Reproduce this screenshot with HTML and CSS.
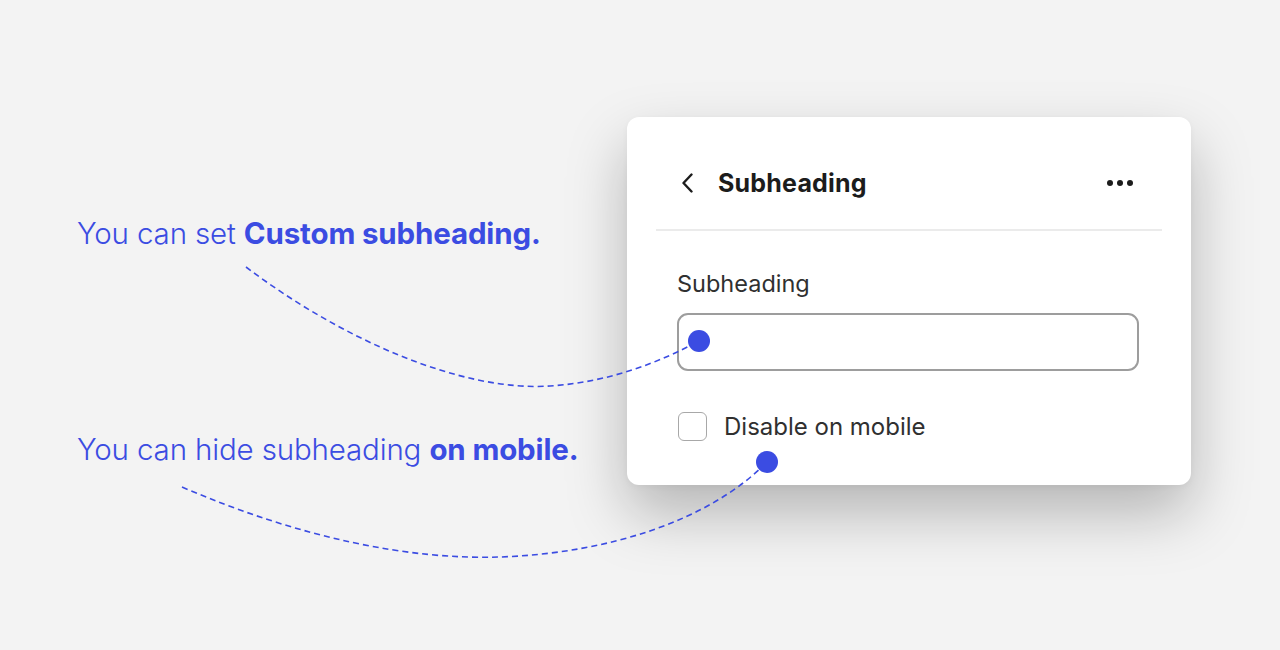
FILE: index.html
```html
<!DOCTYPE html>
<html lang="en">
<head>
<meta charset="utf-8">
<title>Subheading settings</title>
<link rel="stylesheet" href="styles.css">
</head>
<body>
<div class="stage">
  <div class="notes">
    <p class="note note-first">You can set <strong>Custom subheading.</strong></p>
    <p class="note note-second">You can hide subheading <strong>on mobile.</strong></p>
  </div>

  <div class="card">
    <div class="card-header">
      <div class="header-left">
        <svg class="chevron" width="12" height="20" viewBox="0 0 12 20" aria-hidden="true">
          <polyline points="9.5,1.5 1.5,10 9.5,18.5" fill="none" stroke="#1c1c1c" stroke-width="2.4" stroke-linecap="round" stroke-linejoin="round"/>
        </svg>
        <h1 class="title">Subheading</h1>
      </div>
      <div class="more" aria-label="More">
        <span class="dot"></span><span class="dot"></span><span class="dot"></span>
      </div>
    </div>
    <div class="card-body">
      <label class="field-label">Subheading</label>
      <div class="input"></div>
      <div class="check-row">
        <span class="checkbox"></span>
        <span class="check-label">Disable on mobile</span>
      </div>
    </div>
  </div>

  <svg class="overlay" width="1280" height="650" viewBox="0 0 1280 650" aria-hidden="true">
    <path d="M246,267 C340,338 460,392 550,386 C610,382 660,362 699,341" fill="none" stroke="#3b4ce2" stroke-width="1.6" stroke-dasharray="6 4"/>
    <path d="M182,487 C300,538 410,560 500,557 C610,553 710,520 767,462" fill="none" stroke="#3b4ce2" stroke-width="1.6" stroke-dasharray="6 4"/>
    <circle cx="699" cy="341" r="11" fill="#3b4ce2"/>
    <circle cx="767" cy="462" r="11" fill="#3b4ce2"/>
  </svg>
</div>
</body>
</html>
```

FILE: styles.css
```css
* {
  box-sizing: border-box;
}

html, body {
  margin: 0;
  padding: 0;
}

body {
  background: #f3f3f3;
  font-family: Inter, "Noto Sans", sans-serif;
}

.stage {
  position: relative;
  width: 1280px;
  height: 650px;
  display: flex;
  justify-content: space-between;
  padding: 117px 89px 0 77px;
  overflow: hidden;
}

.notes {
  display: flex;
  flex-direction: column;
}

.note {
  margin: 0;
  font-family: Inter, "Noto Sans", sans-serif;
  font-size: 29.5px;
  line-height: 40px;
  font-weight: 300;
  color: #3b4ce2;
  white-space: nowrap;
  letter-spacing: -0.15px;
}

.note strong {
  font-weight: 700;
}

.note-first {
  margin-top: 96px;
}

.note-second {
  margin-top: 176px;
}

.card {
  width: 564px;
  height: 368px;
  background: #ffffff;
  border-radius: 12px;
  padding: 0 29px;
  box-shadow: 0 28px 60px rgba(0, 0, 0, 0.26), 0 2px 6px rgba(0, 0, 0, 0.04);
  display: flex;
  flex-direction: column;
}

.card-header {
  height: 114px;
  padding: 50px 29px 0 26px;
  border-bottom: 2px solid #ebebeb;
  display: flex;
  align-items: flex-start;
  justify-content: space-between;
}

.header-left {
  display: flex;
  align-items: center;
  height: 32px;
  gap: 24px;
}

.chevron {
  display: block;
}

.title {
  margin: 0;
  font-size: 25px;
  line-height: 32px;
  font-weight: 700;
  color: #1c1c1c;
  letter-spacing: 0.2px;
}

.more {
  height: 32px;
  display: flex;
  align-items: center;
  gap: 4px;
}

.dot {
  width: 6px;
  height: 6px;
  border-radius: 50%;
  background: #1c1c1c;
}

.card-body {
  padding: 39px 23px 0 21px;
  display: flex;
  flex-direction: column;
}

.field-label {
  font-size: 23.5px;
  line-height: 28px;
  color: #303030;
}

.input {
  margin-top: 15px;
  height: 58px;
  border: 2px solid #9d9d9d;
  border-radius: 11px;
  background: #ffffff;
}

.check-row {
  margin-top: 41px;
  display: flex;
  align-items: center;
  gap: 17px;
}

.checkbox {
  width: 29px;
  height: 29px;
  border: 1.5px solid #a8a8a8;
  border-radius: 6px;
  margin-left: 1px;
}

.check-label {
  font-size: 24px;
  line-height: 28px;
  color: #303030;
}

.overlay {
  position: absolute;
  left: 0;
  top: 0;
  pointer-events: none;
}
```
